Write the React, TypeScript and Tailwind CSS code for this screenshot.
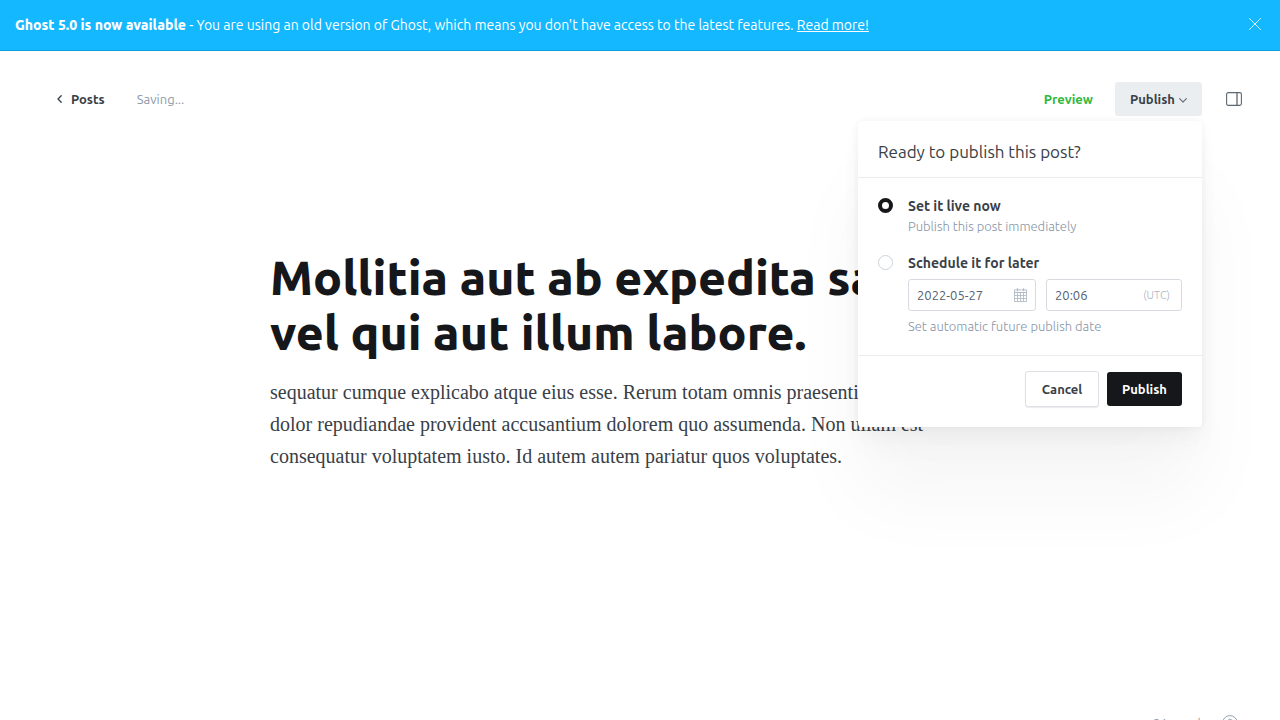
import { useState } from "react";

type PublishMode = "now" | "later";

const titleLines = ["Mollitia aut ab expedita saepe", "vel qui aut illum labore."];

const bodyLines = [
  "sequatur cumque explicabo atque eius esse. Rerum totam omnis praesentium",
  "dolor repudiandae provident accusantium dolorem quo assumenda. Non ullam est",
  "consequatur voluptatem iusto. Id autem autem pariatur quos voluptates.",
];

function CloseIcon() {
  return (
    <svg className="size-3" viewBox="0 0 12 12" fill="none" stroke="currentColor" strokeWidth="0.8" aria-hidden="true">
      <path d="M0 0l12 12M12 0L0 12" />
    </svg>
  );
}

function BackIcon() {
  return (
    <svg className="h-2 w-[5px]" viewBox="0 0 5 8" fill="none" stroke="currentColor" strokeWidth="1.3" strokeLinecap="round" strokeLinejoin="round" aria-hidden="true">
      <path d="M4.2 0.8L1 4l3.2 3.2" />
    </svg>
  );
}

function ChevronIcon() {
  return (
    <svg className="mt-[2px] h-[5px] w-2" viewBox="0 0 8 5" fill="none" stroke="#6b7681" strokeWidth="1.2" strokeLinecap="round" strokeLinejoin="round" aria-hidden="true">
      <path d="M0.6 0.6L4 4l3.4-3.4" />
    </svg>
  );
}

function SidebarIcon() {
  return (
    <svg className="h-[14px] w-4" viewBox="0 0 16 14" fill="none" stroke="#5d6870" aria-hidden="true">
      <rect x="0.6" y="0.6" width="14.8" height="12.8" rx="1.6" strokeWidth="1.1" />
      <path d="M11 0.6v12.8" strokeWidth="1.3" />
    </svg>
  );
}

function CalendarIcon() {
  return (
    <svg className="h-[14px] w-[13px] shrink-0" viewBox="0 0 13 14" fill="none" stroke="#b3bcc6" aria-hidden="true">
      <rect x="0.5" y="1.9" width="12" height="11.6" strokeWidth="0.9" />
      <path d="M0.5 4.5h12" strokeWidth="1" />
      <path d="M3.5 0.3v3M9.5 0.3v3" strokeWidth="1.3" />
      <path d="M3.5 5v8M6.5 5v8M9.5 5v8M1 7.5h11M1 10.5h11" strokeWidth="0.9" />
    </svg>
  );
}

function HelpIcon() {
  return (
    <svg className="size-4" viewBox="0 0 16 16" fill="none" stroke="currentColor" strokeWidth="0.8" aria-hidden="true">
      <circle cx="8" cy="8" r="7.4" />
      <path d="M6 6.2a2 2 0 1 1 2.6 1.9c-.4.2-.6.4-.6.9v.6M8 11.3v.8" />
    </svg>
  );
}

const radioClass =
  "size-[15px] shrink-0 appearance-none rounded-full border border-[#ccd3d8] bg-white checked:border-4 checked:border-[#15171a]";

function PublishMenu() {
  const [mode, setMode] = useState<PublishMode>("now");
  return (
    <form
      onSubmit={(e) => e.preventDefault()}
      className="absolute top-full right-0 z-10 mt-[5px] w-[344px] rounded-[4px] bg-white text-[13px] font-normal text-[#394047] shadow-[0_0_7px_rgba(0,0,0,0.05),0_8px_20px_rgba(0,0,0,0.03),0_22px_30px_rgba(0,0,0,0.02),0_70px_80px_rgba(0,0,0,0.04)]"
    >
      <h2 className="border-b border-[#e9edee] px-5 pt-[19px] pb-[13px] text-[17px] leading-6">Ready to publish this post?</h2>
      <div className="flex flex-col gap-[17px] border-b border-[#e9edee] px-5 pt-[18px] pb-[19px]">
        <div className="flex gap-[15px]">
          <div className="flex h-[18px] items-center"><input id="publish-now" type="radio" name="publish-mode" checked={mode === "now"} onChange={() => setMode("now")} className={radioClass} /></div>
          <div>
            <label htmlFor="publish-now" className="block text-sm leading-5 font-semibold">Set it live now</label>
            <p className="leading-5 font-light text-[#8594a5]">Publish this post immediately</p>
          </div>
        </div>
        <div className="flex gap-[15px]">
          <div className="flex h-[18px] items-center"><input id="publish-later" type="radio" name="publish-mode" checked={mode === "later"} onChange={() => setMode("later")} className={radioClass} /></div>
          <div className="min-w-0 flex-1">
            <label htmlFor="publish-later" className="block text-sm leading-5 font-semibold">Schedule it for later</label>
            <div className="mt-[6px] flex gap-[10px]">
              <div className="flex h-8 w-32 items-center rounded-[3px] border border-[#d7dbdf] px-2">
                <input aria-label="Publish date" defaultValue="2022-05-27" className="h-full w-full min-w-0 bg-transparent text-[#546070] outline-none" />
                <CalendarIcon />
              </div>
              <div className="flex h-8 min-w-0 flex-1 items-center rounded-[3px] border border-[#d7dbdf] pr-[11px] pl-2">
                <input aria-label="Publish time" defaultValue="20:06" className="h-full w-full min-w-0 bg-transparent text-[#546070] outline-none" />
                <span className="text-[11px] font-light text-[#aab4be]">(UTC)</span>
              </div>
            </div>
            <p className="mt-[5px] leading-5 font-light text-[#8594a5]">Set automatic future publish date</p>
          </div>
        </div>
      </div>
      <div className="flex items-center justify-end gap-2 px-5 pt-[15px] pb-5 leading-5 font-semibold">
        <button type="button" className="h-9 w-[74px] rounded-[3px] border border-[#dde1e5] bg-white shadow-[0_1px_1px_rgba(0,0,0,0.08)]">Cancel</button>
        <button type="submit" className="h-[34px] w-[75px] rounded-[3px] bg-[#15171a] text-white">Publish</button>
      </div>
    </form>
  );
}

export default function App() {
  return (
    <div className="flex h-screen flex-col overflow-hidden bg-white font-[Ubuntu,'Open_Sans',sans-serif]">
      <aside className="flex shrink-0 items-center justify-between border-b border-[#0e9fe0] bg-[#14b8ff] py-[15px] pr-[19px] pl-[15px] text-sm leading-5 text-white">
        <p>
          <b className="font-extrabold">Ghost 5.0 is now available</b> - You are using an old version of Ghost, which means you don't have access to the latest features.{" "}
          <a href="#upgrade" className="underline">Read more!</a>
        </p>
        <button type="button" aria-label="Close" className="-mt-[2px]"><CloseIcon /></button>
      </aside>

      <div className="flex h-screen shrink-0 flex-col">
        <header className="flex items-center justify-between pt-[31px] pr-[38px] pl-[57px] text-[13px] leading-5">
          <div className="flex items-center gap-8">
            <a href="#posts" className="flex items-center gap-[9px] font-semibold text-[#394047]"><BackIcon />Posts</a>
            <span className="text-[#8e9cac]">Saving...</span>
          </div>
          <div className="flex items-center font-semibold">
            <button type="button" className="mr-[22px] text-[#30b83e]">Preview</button>
            <div className="relative">
              <button type="button" aria-expanded="true" className="flex h-[34px] w-[87px] items-center justify-center gap-1 rounded-[3px] bg-[#ebeef0] text-[#394047]">
                Publish<ChevronIcon />
              </button>
              <PublishMenu />
            </div>
            <button type="button" aria-label="Settings" className="ml-6"><SidebarIcon /></button>
          </div>
        </header>

        <main className="mx-auto w-full max-w-[740px] flex-1 pt-[134px]">
          <h1 className="text-5xl leading-[55px] font-extrabold text-[#15171a]">
            {titleLines.map((line) => <span key={line} className="block whitespace-nowrap">{line}</span>)}
          </h1>
          <p className="mt-4 font-['Liberation_Serif',serif] text-xl leading-8 text-[#394047]">
            {bodyLines.map((line) => <span key={line} className="block whitespace-nowrap">{line}</span>)}
          </p>
        </main>

        <footer className="flex items-center justify-end gap-4 pr-[42px] pb-10 text-[13px] leading-4 font-light text-[#7c8b9a]">
          <span>31 words</span>
          <button type="button" aria-label="Help"><HelpIcon /></button>
        </footer>
      </div>
    </div>
  );
}
